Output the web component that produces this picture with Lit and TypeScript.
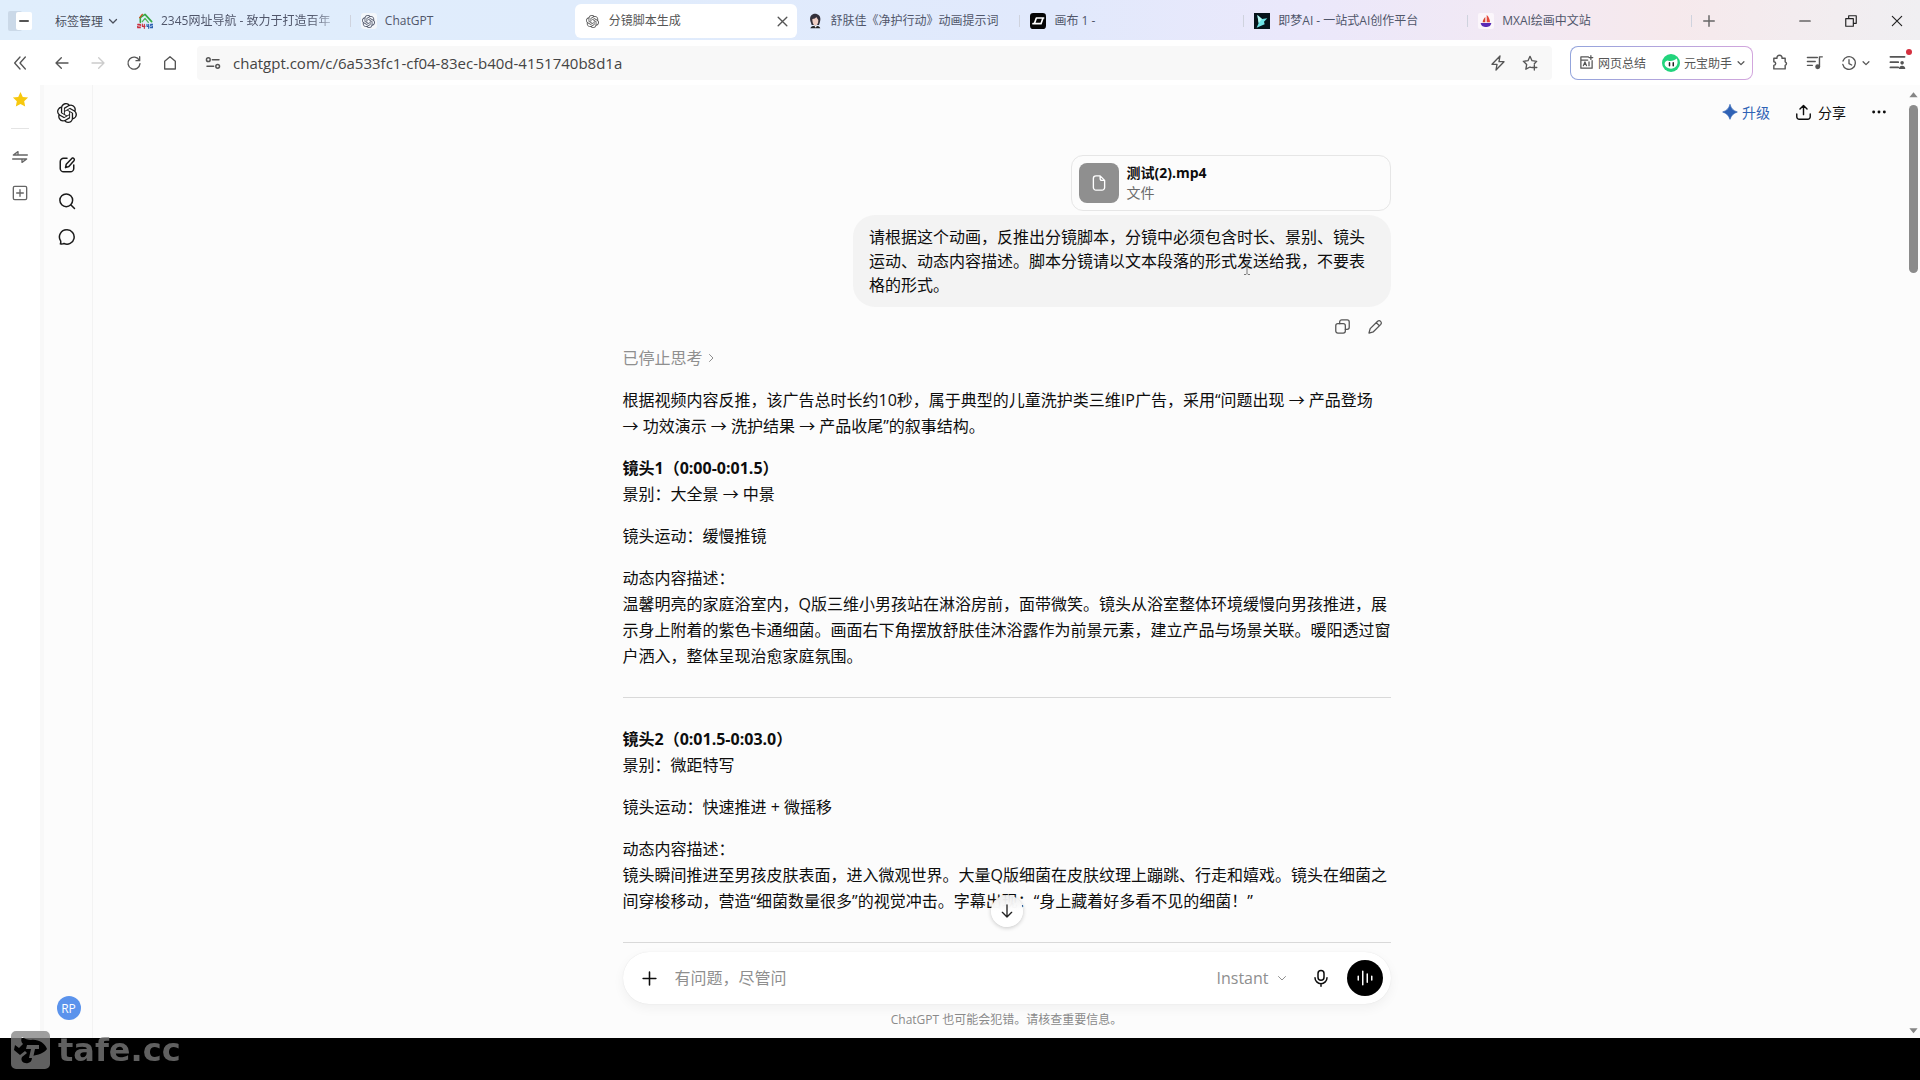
import { LitElement, html, svg, css, nothing } from "lit";
import type { SVGTemplateResult } from "lit";
import { customElement } from "lit/decorators.js";
import { classMap } from "lit/directives/class-map.js";

const knot = svg`<path fill="currentColor" stroke="none" d="M22.2819 9.8211a5.9847 5.9847 0 0 0-.5157-4.9108 6.0462 6.0462 0 0 0-6.5098-2.9A6.0651 6.0651 0 0 0 4.9807 4.1818a5.9847 5.9847 0 0 0-3.9977 2.9 6.0462 6.0462 0 0 0 .7427 7.0966 5.98 5.98 0 0 0 .511 4.9107 6.051 6.051 0 0 0 6.5146 2.9001A5.9847 5.9847 0 0 0 13.2599 24a6.0557 6.0557 0 0 0 5.7718-4.2058 5.9894 5.9894 0 0 0 3.9977-2.9001 6.0557 6.0557 0 0 0-.7475-7.0729zm-9.022 12.6081a4.4755 4.4755 0 0 1-2.8764-1.0408l.1419-.0804 4.7783-2.7582a.7948.7948 0 0 0 .3927-.6813v-6.7369l2.02 1.1686a.071.071 0 0 1 .038.052v5.5826a4.504 4.504 0 0 1-4.4945 4.4944zm-9.6607-4.1254a4.4708 4.4708 0 0 1-.5346-3.0137l.142.0852 4.783 2.7582a.7712.7712 0 0 0 .7806 0l5.8428-3.3685v2.3324a.0804.0804 0 0 1-.0332.0615L9.74 19.9502a4.4992 4.4992 0 0 1-6.1408-1.6464zM2.3408 7.8956a4.485 4.485 0 0 1 2.3655-1.9728V11.6a.7664.7664 0 0 0 .3879.6765l5.8144 3.3543-2.0201 1.1685a.0757.0757 0 0 1-.071 0l-4.8303-2.7865A4.504 4.504 0 0 1 2.3408 7.872zm16.5963 3.8558L13.1038 8.364 15.1192 7.2a.0757.0757 0 0 1 .071 0l4.8303 2.7913a4.4944 4.4944 0 0 1-.6765 8.1042v-5.6772a.79.79 0 0 0-.407-.667zm2.0107-3.0231l-.142-.0852-4.7735-2.7818a.7759.7759 0 0 0-.7854 0L9.409 9.2297V6.8974a.0662.0662 0 0 1 .0284-.0615l4.8303-2.7866a4.4992 4.4992 0 0 1 6.6802 4.66zM8.3065 12.863l-2.02-1.1638a.0804.0804 0 0 1-.038-.0567V6.0742a4.4992 4.4992 0 0 1 7.3757-3.4537l-.142.0805L8.704 5.459a.7948.7948 0 0 0-.3927.6813zm1.0976-2.3654l2.602-1.4998 2.6069 1.4998v2.9994l-2.5974 1.4997-2.6067-1.4997Z"/>`;

const icons: Record<string, SVGTemplateResult> = {
  knot,
  panel: svg`<rect x="0" y="2" width="14" height="20" rx="2" fill="#cbd9e8" stroke="none"/><rect x="8" y="3" width="16" height="18" rx="2" fill="#fff" stroke="none"/><path d="M12 12h8" stroke="#555" stroke-width="2"/>`,
  chevron: svg`<path d="M5 9l7 7 7-7"/>`,
  chevronRight: svg`<path d="M9 5l7 7-7 7"/>`,
  close: svg`<path d="M4 4l16 16M20 4L4 20"/>`,
  plus: svg`<path d="M12 3v18M3 12h18"/>`,
  minus: svg`<path d="M3 12h18"/>`,
  restore: svg`<path d="M3 8h13v13H3zM8 8V3h13v13h-5"/>`,
  collapse: svg`<path d="M12 3l-8 9 8 9M20 3l-8 9 8 9"/>`,
  back: svg`<path d="M21 12H3M11 4l-8 8 8 8"/>`,
  forward: svg`<path d="M3 12h18M13 4l8 8-8 8"/>`,
  reload: svg`<path d="M20 8a9 9 0 1 0 1 5M20.500 2.500V8.500H15"/>`,
  home: svg`<path d="M4 9.500L12 2.500l8 7V21H4z"/>`,
  site: svg`<circle cx="5" cy="7" r="2.800"/><path d="M11 7h10M3 17h10"/><circle cx="19" cy="17" r="2.800"/>`,
  bolt: svg`<path d="M15 1.500L3 14h7.500L9 22.500 21 10h-7.500z"/>`,
  starPlus: svg`<path d="M13 18.500l-1-.5-6.200 3.300 1.200-7L2 9.500l7-1 3-6.500 3 6.500 7 1-3.500 3.500M18.500 15v7.500M14.700 18.700h7.500"/>`,
  aiBox: svg`<path d="M15 3H3v18h18V9M3 8h11M7 17l2.500-6 2.500 6M8 15h3M16 11v6M19 1v6M16 4h6"/>`,
  bao: svg`<circle cx="12" cy="12" r="12" fill="#22d47c" stroke="none"/><path d="M3.500 13c0-2 1.500-4 4-4.500 4 1.500 9 .5 12-2.500 1.300 2 1.500 4.500 1 7-.8 4-4.300 6.500-8.500 6.500S3.500 17 3.500 13z" fill="#fff" stroke="none"/><path d="M10 11.500v4M15 11.500v4" stroke="#222" stroke-width="2"/>`,
  puzzle: svg`<path d="M4 6h4.500c-1-5.500 8-5.500 7 0H20v5c2.500 1 2.500 4 0 5v5H4v-5c3.500-.5 3.500-4.500 0-5z"/>`,
  playlist: svg`<path d="M2 5h14M2 10.500h11M2 16h7M19 18V4h4"/><circle cx="16.500" cy="18" r="2.500" fill="currentColor"/>`,
  history: svg`<path d="M3 9a9.500 9.500 0 1 1-.3 5M12 7v6l4 2"/>`,
  menuUser: svg`<path d="M2 4h20M2 11.500h11M2 19h11"/><circle cx="18.500" cy="12.500" r="2.500" fill="currentColor" stroke="none"/><path d="M14 21c0-6 9-6 9 0z" fill="currentColor" stroke="none"/>`,
  starFill: svg`<path d="M12 1.500l3.200 6.900 7.500.9-5.500 5.200 1.400 7.500L12 18.300 5.400 22l1.400-7.500L1.300 9.300l7.500-.9z" fill="#f7c80e" stroke="none"/>`,
  swap: svg`<path d="M23 9H2L9 4v5M1 15h21l-7 5v-5"/>`,
  plusBox: svg`<rect x="2" y="2" width="20" height="20" rx="2"/><path d="M12 7v10M7 12h10"/>`,
  compose: svg`<path d="M12 3H7.500A4.500 4.500 0 0 0 3 7.500v9A4.500 4.500 0 0 0 7.500 21h9a4.500 4.500 0 0 0 4.500-4.500V12M19 2.700a2.200 2.200 0 0 1 2.500 3.200L14.500 14l-4.500 1.500L11 11z"/>`,
  search: svg`<circle cx="11" cy="11" r="8.500"/><path d="M17.300 17.300L22 22"/>`,
  bubble: svg`<path d="M12 2.500a9.500 9.500 0 1 1-4 18.100c-1.500.9-3.500 1-4.800.6.500-1.200.7-2.500.3-4A9.500 9.500 0 0 1 12 2.500z"/>`,
  sparkle: svg`<path d="M12 1c2 6 5 9 11 11-6 2-9 5-11 11-2-6-5-9-11-11 6-2 9-5 11-11z" fill="currentColor"/>`,
  share: svg`<path d="M12 15V2.500M7 7l5-5 5 5M2.500 14v4a3.500 3.500 0 0 0 3.500 3.500h12a3.500 3.500 0 0 0 3.500-3.500v-4"/>`,
  dots: svg`<g fill="currentColor" stroke="none"><circle cx="4" cy="12" r="2.200"/><circle cx="12" cy="12" r="2.200"/><circle cx="20" cy="12" r="2.200"/></g>`,
  file: svg`<path d="M13.500 2.500H8A3.500 3.500 0 0 0 4.500 6v12A3.500 3.500 0 0 0 8 21.500h8a3.500 3.500 0 0 0 3.500-3.500V8.500zM13.500 2.500V6A2.500 2.500 0 0 0 16 8.500h3.500"/>`,
  copy: svg`<rect x="2.500" y="8" width="13.500" height="13.500" rx="3"/><path d="M8 8V5.500a3 3 0 0 1 3-3h7.500a3 3 0 0 1 3 3V13a3 3 0 0 1-3 3H16"/>`,
  pencil: svg`<path d="M15 4.500a3.200 3.200 0 0 1 4.500 4.500L9 19.500 2.800 21.200 4.500 15zM13 6.500l4.500 4.500"/>`,
  down: svg`<path d="M12 3v18M5 14l7 7 7-7"/>`,
  mic: svg`<rect x="8" y="2" width="8" height="13" rx="4"/><path d="M4 11.500a8 8 0 0 0 16 0M12 19.500V23"/>`,
  voice: svg`<path d="M3 9.500v5M9 3v18M15 6.500v11M21 9.500v5"/>`,
  triUp: svg`<path d="M1 19L12 6l11 13z" fill="currentColor" stroke="none"/>`,
  triDown: svg`<path d="M1 6l11 13L23 6z" fill="currentColor" stroke="none"/>`,
  houseColors: svg`<path d="M5 14V7l7-5 10 11" stroke="#35a843" stroke-width="2.500"/><path d="M4 7l4-5" stroke="#c8501e" stroke-width="2"/><path d="M8 13l4-5 5 6" stroke="#54b95d" stroke-width="2"/><path d="M1 17h4v2.500H1V22h4M8 16.500V20h4M11 17v6" stroke="#c92f3d" stroke-width="1.700"/><path d="M15 17v3h3M17.500 17v6M23.500 17h-3v2.500h3V22h-3.500" stroke="#2b5faf" stroke-width="1.700"/>`,
  portrait: svg`<path d="M5 12C3 4 8 1 12 1s10 3 7.500 12L18 18H7z" fill="#33303a" stroke="none"/><path d="M8 9c3 0 5-1 6-3 1 2 2.500 3 3 5 0 5-2 8-4.500 8S8 15 8 9z" fill="#f0cfc4" stroke="none"/><path d="M5 23c1-5 14-5 15 0z" fill="#222" stroke="none"/><path d="M11 19h4l-2 3z" fill="#fff" stroke="none"/>`,
  canvas: svg`<rect width="24" height="24" rx="5" fill="#050505" stroke="none"/><path d="M9.500 7.500h10l-3 8.500h-10zM4.500 16h4M16.500 7.500h4" stroke="#fff" stroke-width="2.500"/>`,
  dream: svg`<rect width="24" height="24" fill="#06131a" stroke="none"/><path d="M5 3l7 6 8-1-5 5 1 4-7 3-5 2 3-7z" fill="#6fe3e6" stroke="none"/><path d="M5 3l7 6-5 6z" fill="#b8f6ef" stroke="none"/>`,
  boat: svg`<rect width="24" height="24" rx="3" fill="#fbf6fb" stroke="none"/><path d="M13 3v11h5c0-4-2-9-5-11z" fill="#e6493c" stroke="none"/><path d="M11 6v8H7c0-3 2-6 4-8z" fill="#d6452f" stroke="none"/><path d="M4 15h16c-1 5-4 6-8 6s-7-1-8-6z" fill="#5a2bb5" stroke="none"/>`,
};

const icon = (name: string, size = 20, stroke = 2, cls = "") => html`<svg
  class="icon ${cls}" width=${size} height=${size} viewBox="0 0 24 24" fill="none"
  stroke="currentColor" stroke-width=${stroke} stroke-linecap="round" stroke-linejoin="round"
  aria-hidden="true">${icons[name]}</svg>`;

const iconButton = (name: string, label: string, size = 20, stroke = 2, cls = "") => html`<button
  class="icon-button ${cls}" aria-label=${label}>${icon(name, size, stroke)}</button>`;

interface Tab { icon: string; title: string; active?: boolean; faded?: boolean; rule?: boolean }

const tabs: Tab[] = [
  { icon: "houseColors", title: "2345网址导航 - 致力于打造百年", faded: true, rule: true },
  { icon: "knot", title: "ChatGPT" },
  { icon: "knot", title: "分镜脚本生成", active: true },
  { icon: "portrait", title: "舒肤佳《净护行动》动画提示词", rule: true },
  { icon: "canvas", title: "画布 1 -", rule: true },
  { icon: "dream", title: "即梦AI - 一站式AI创作平台", rule: true },
  { icon: "boat", title: "MXAI绘画中文站", rule: true },
];

interface Shot { title: string; size: string; move: string; text: string }

const shots: Shot[] = [
  {
    title: "镜头1（0:00-0:01.5）",
    size: "大全景 → 中景",
    move: "缓慢推镜",
    text: "温馨明亮的家庭浴室内，Q版三维小男孩站在淋浴房前，面带微笑。镜头从浴室整体环境缓慢向男孩推进，展示身上附着的紫色卡通细菌。画面右下角摆放舒肤佳沐浴露作为前景元素，建立产品与场景关联。暖阳透过窗户洒入，整体呈现治愈家庭氛围。",
  },
  {
    title: "镜头2（0:01.5-0:03.0）",
    size: "微距特写",
    move: "快速推进 + 微摇移",
    text: "镜头瞬间推进至男孩皮肤表面，进入微观世界。大量Q版细菌在皮肤纹理上蹦跳、行走和嬉戏。镜头在细菌之间穿梭移动，营造“细菌数量很多”的视觉冲击。字幕出现：“身上藏着好多看不见的细菌！”",
  },
];

const shared = css`
  * { box-sizing: border-box; }
  button, input, select {
    font: inherit;
    color: inherit;
    background: none;
    border: 0;
    padding: 0;
    margin: 0;
    outline: none;
  }
  button { display: inline-flex; align-items: center; justify-content: center; white-space: nowrap; }
  p, h2 { margin: 0; }
  .icon { display: block; flex: none; }
`;

@customElement("browser-chrome")
export class BrowserChrome extends LitElement {
  static styles = [shared, css`
    :host { display: block; font-size: 12px; color: #4a4f5c; }
    .strip {
      display: flex;
      align-items: center;
      height: 40px;
      padding-top: 2px;
      background: linear-gradient(90deg, #e0eefc 0%, #e0ecfc 30%, #e1e9fc 55%, #ebe8fb 68%, #f3e9f3 80%, #f6e9ec 87%, #f0eff2 100%);
    }
    .manage { display: flex; width: 127px; flex: none; align-items: center; padding-left: 8px; gap: 23px; }
    .manage-button { gap: 4px; }
    .tabs { display: flex; flex: 1; min-width: 0; height: 100%; align-items: center; }
    .tab {
      display: flex;
      flex: 1 1 0;
      min-width: 0;
      height: 32px;
      align-items: center;
      gap: 8px;
      padding: 0 10px;
      color: #50566a;
      position: relative;
    }
    .tab.active { height: 34px; background: #fff; border-radius: 6px; color: #555; padding-right: 8px; }
    .tab.rule::after { content: ""; position: absolute; right: 0; top: 10px; height: 12px; width: 1px; background: #cfd3de; }
    .tab-title { white-space: nowrap; line-height: 18px; text-align: left; }
    .tab-title.faded { mask-image: linear-gradient(90deg, #000 88%, rgba(0, 0, 0, 0.4)); }
    .tab-link { display: flex; flex: 1; min-width: 0; align-items: center; gap: 8px; color: inherit; text-decoration: none; }
    .tile { display: flex; flex: none; width: 16px; height: 16px; align-items: center; justify-content: center; }
    .tile.white { background: #f4f7fb; border-radius: 3px; }
    .window { display: flex; width: 228px; flex: none; align-items: center; justify-content: space-between; padding: 0 16px 0 10px; color: #666; }
    .window-controls { display: flex; gap: 32px; color: #222; }
    .bar { display: flex; align-items: center; height: 45px; background: #fff; color: #555; }
    .nav { display: flex; width: 197px; flex: none; align-items: center; padding-left: 12px; gap: 20px; }
    .nav .first { margin-right: 6px; }
    .disabled { color: #ccc; }
    .address {
      display: flex;
      flex: 1;
      min-width: 0;
      height: 34px;
      align-items: center;
      gap: 12px;
      padding: 0 14px 0 8px;
      background: #f8f8f8;
      border-radius: 4px;
    }
    .url { flex: 1; min-width: 0; font-size: 15px; line-height: 20px; color: #444; }
    .quick { display: flex; gap: 16px; }
    .assist {
      display: flex;
      height: 34px;
      align-items: center;
      gap: 16px;
      margin-left: 18px;
      padding: 0 6px 0 8px;
      border: 1px solid transparent;
      border-radius: 8px;
      background: linear-gradient(#fff, #fff) padding-box, linear-gradient(90deg, #93a4dc, #d2a6dd) border-box;
    }
    .assist-button { gap: 4px; }
    .extras { display: flex; align-items: center; gap: 18px; padding: 0 14px 0 18px; }
    .history { gap: 4px; }
    .badge-holder { position: relative; display: inline-flex; }
    .badge { position: absolute; right: -6px; top: -5px; width: 6px; height: 6px; border-radius: 50%; background: #d5303f; }
  `];

  private renderTab(tab: Tab) {
    const knotTab = tab.icon === "knot";
    return html`<div class=${classMap({ tab: true, active: !!tab.active, rule: !!tab.rule })}>
      <a class="tab-link" href="#">
        <span class=${classMap({ tile: true, white: knotTab && !tab.active })}>${icon(tab.icon, knotTab ? 13 : 16, 2)}</span>
        <span class=${classMap({ "tab-title": true, faded: !!tab.faded })}>${tab.title}</span>
      </a>
      ${tab.active ? iconButton("close", "关闭标签页", 13, 2.5) : nothing}
    </div>`;
  }

  render() {
    return html`
      <header class="strip">
        <div class="manage">
          ${iconButton("panel", "侧边栏", 24, 2)}
          <button class="manage-button">标签管理 ${icon("chevron", 12, 2.5)}</button>
        </div>
        <nav class="tabs">${tabs.map((t) => this.renderTab(t))}</nav>
        <div class="window">
          ${iconButton("plus", "新建标签页", 14, 2.5)}
          <div class="window-controls">
            ${iconButton("minus", "最小化", 14, 2)}${iconButton("restore", "还原", 14, 2)}${iconButton("close", "关闭", 14, 2)}
          </div>
        </div>
      </header>
      <div class="bar">
        <div class="nav">
          ${iconButton("collapse", "收起", 16, 2, "first")}
          ${iconButton("back", "后退", 16, 2)}
          ${iconButton("forward", "前进", 16, 2, "disabled")}
          ${iconButton("reload", "刷新", 16, 2)}
          ${iconButton("home", "主页", 16, 2)}
        </div>
        <div class="address">
          ${icon("site", 16, 2.2)}
          <input class="url" aria-label="地址栏" value="chatgpt.com/c/6a533fc1-cf04-83ec-b40d-4151740b8d1a" />
          <div class="quick">${iconButton("bolt", "加速", 16, 2)}${iconButton("starPlus", "收藏", 16, 2)}</div>
        </div>
        <div class="assist">
          <button class="assist-button">${icon("aiBox", 15, 2)}网页总结</button>
          <button class="assist-button">${icon("bao", 18, 2)}<span>元宝助手</span>${icon("chevron", 10, 3)}</button>
        </div>
        <div class="extras">
          ${iconButton("puzzle", "扩展", 17, 2)}
          ${iconButton("playlist", "媒体", 17, 2)}
          <button class="history" aria-label="历史">${icon("history", 16, 2)}${icon("chevron", 10, 3)}</button>
          <span class="badge-holder">${iconButton("menuUser", "菜单", 17, 2.5)}<span class="badge"></span></span>
        </div>
      </div>`;
  }
}

@customElement("chat-message-list")
export class ChatMessageList extends LitElement {
  static styles = [shared, css`
    :host { display: flex; flex-direction: column; font-size: 16px; line-height: 26px; color: #0d0d0d; }
    .user { display: flex; flex-direction: column; align-items: flex-end; gap: 4px; }
    .attachment {
      display: flex;
      width: 320px;
      max-width: 100%;
      height: 56px;
      align-items: center;
      gap: 8px;
      padding: 0 7px;
      border: 1px solid #e6e6e6;
      border-radius: 12px;
      font-size: 14px;
      line-height: 20px;
    }
    .file { display: flex; width: 40px; height: 40px; align-items: center; justify-content: center; border-radius: 8px; background: #8f8f8f; color: #fff; }
    .name { font-weight: 700; }
    .kind { color: #6b6b6b; }
    .bubble {
      position: relative;
      max-width: 70%;
      padding: 10px 16px;
      border-radius: 22px;
      background: #f3f3f3;
      line-height: 24px;
    }
    .caret { position: absolute; left: 390px; top: 46px; color: #777; }
    .actions { display: flex; gap: 16px; padding: 7px 7px 0 0; color: #555; }
    .thinking { align-self: flex-start; gap: 2px; margin: 10px 0 16px; color: #8f8f8f; }
    .block { margin-bottom: 16px; }
    .heading { font-size: 16px; line-height: 26px; font-weight: 700; }
    .last { margin-bottom: 0; }
    .divider { width: 100%; height: 1px; margin: 28px 0; border: 0; background: #d9d9d9; }
  `];

  render() {
    return html`
      <section class="user">
        <div class="attachment">
          <span class="file">${icon("file", 18, 1.8)}</span>
          <div><p class="name">测试(2).mp4</p><p class="kind">文件</p></div>
        </div>
        <p class="bubble">请根据这个动画，反推出分镜脚本，分镜中必须包含时长、景别、镜头运动、动态内容描述。脚本分镜请以文本段落的形式发送给我，不要表格的形式。
          <svg class="caret" width="8" height="14" viewBox="0 0 8 14" fill="none" stroke="currentColor" aria-hidden="true"><path d="M1 .5h2l1 1 1-1h2M4 1.500v11M1 13.500h2l1-1 1 1h2"/></svg></p>
        <div class="actions">${iconButton("copy", "复制", 17, 1.8)}${iconButton("pencil", "编辑", 17, 1.8)}</div>
      </section>
      <button class="thinking">已停止思考 ${icon("chevronRight", 12, 2)}</button>
      <p class="block">根据视频内容反推，该广告总时长约10秒，属于典型的儿童洗护类三维IP广告，采用“问题出现 → 产品登场 → 功效演示 → 洗护结果 → 产品收尾”的叙事结构。</p>
      ${shots.map((s) => html`
        <h2 class="heading">${s.title}</h2>
        <p class="block">景别：${s.size}</p>
        <p class="block">镜头运动：${s.move}</p>
        <p class="block last">动态内容描述：<br />${s.text}</p>
        <hr class="divider" />`)}`;
  }
}

@customElement("chat-composer")
export class ChatComposer extends LitElement {
  static styles = [shared, css`
    :host { display: block; position: relative; }
    .box {
      display: flex;
      height: 52px;
      align-items: center;
      padding: 0 8px 0 18px;
      border-radius: 26px;
      background: #fff;
      box-shadow: 0 0 1px rgba(0, 0, 0, 0.12), 0 4px 12px rgba(0, 0, 0, 0.05);
      font-size: 16px;
      color: #0d0d0d;
    }
    .prompt { flex: 1; min-width: 0; height: 26px; margin-left: 17px; }
    .prompt::placeholder { color: #8f8f8f; opacity: 1; }
    .model { display: flex; align-items: center; gap: 6px; color: #8f8f8f; }
    .select { appearance: none; }
    .mic { margin: 0 17px 0 24px; }
    .voice { width: 36px; height: 36px; border-radius: 50%; background: #000; color: #fff; }
    .note { padding-bottom: 2px; font-size: 12px; line-height: 32px; text-align: center; color: #8a8a8a; }
    .jump {
      position: absolute;
      left: calc(50% - 16px);
      top: -57px;
      width: 32px;
      height: 32px;
      border-radius: 50%;
      background: linear-gradient(rgba(236, 236, 236, 0.93), #fff 50%);
      box-shadow: 0 1px 4px rgba(0, 0, 0, 0.22);
      color: #222;
    }
  `];

  render() {
    return html`
      ${iconButton("down", "滚动到底部", 16, 2, "jump")}
      <form class="box">
        ${iconButton("plus", "添加", 17, 2.2)}
        <input class="prompt" type="text" aria-label="消息" placeholder="有问题，尽管问" />
        <label class="model"><select class="select" aria-label="模型"><option>Instant</option></select>${icon("chevron", 12, 2)}</label>
        ${iconButton("mic", "听写", 18, 2, "mic")}
        ${iconButton("voice", "语音", 18, 2, "voice")}
      </form>
      <p class="note">ChatGPT 也可能会犯错。请核查重要信息。</p>`;
  }
}

@customElement("app-root")
export class AppRoot extends LitElement {
  static styles = [shared, css`
    :host {
      display: flex;
      flex-direction: column;
      height: 100vh;
      overflow: hidden;
      position: relative;
      background: #000;
      font-family: "Open Sans", "Noto Sans CJK SC", sans-serif;
    }
    .body { display: flex; flex: 1; min-height: 0; background: #fcfcfc; }
    .dock { display: flex; flex-direction: column; width: 44px; flex: none; align-items: center; padding: 6px 0 0; background: #fff; color: #666; border-right: 4px solid #f8f8f8; }
    .dock-rule { width: 18px; height: 1px; margin: 20px 0; background: #e4e4e4; }
    .dock-list { display: flex; flex-direction: column; gap: 20px; }
    .rail { display: flex; flex-direction: column; width: 49px; flex: none; align-items: center; justify-content: space-between; padding: 18px 2px 18px 0; border-right: 1px solid #f3f3f3; color: #1a1a1a; }
    .rail-list { display: flex; flex-direction: column; align-items: center; gap: 18px; }
    .brand { margin-bottom: 15px; }
    .avatar { width: 24px; height: 24px; margin-left: 3px; border-radius: 50%; background: #5b93ec; color: #fff; font-size: 12px; }
    .main { display: flex; flex: 1; min-width: 0; flex-direction: column; padding-left: 14px; }
    .top { display: flex; height: 54px; flex: none; align-items: center; justify-content: flex-end; gap: 25px; padding-right: 19px; font-size: 14px; color: #0d0d0d; }
    .top-button { gap: 6px; }
    .upgrade { color: #2f62b5; gap: 4px; }
    .column { width: 100%; max-width: 768px; margin: 0 auto; }
    .scroll { flex: 1; min-height: 0; overflow: hidden; padding-top: 16px; }
    .track { display: flex; flex-direction: column; width: 14px; flex: none; align-items: center; justify-content: space-between; padding: 5px 0 3px; color: #858585; }
    .track-start { display: flex; flex-direction: column; align-items: center; gap: 6px; }
    .thumb { width: 9px; height: 168px; border-radius: 5px; background: #8b8b8b; }
    .letterbox { height: 42px; flex: none; }
    .watermark { position: absolute; left: 11px; bottom: 11px; display: flex; align-items: center; gap: 8px; color: #808080; opacity: 0.75; }
    .watermark-text { font-family: "DejaVu Sans", sans-serif; font-size: 32px; line-height: 38px; font-weight: 700; }
  `];

  render() {
    return html`
      <browser-chrome></browser-chrome>
      <div class="body">
        <aside class="dock">
          ${iconButton("starFill", "收藏夹", 17)}
          <span class="dock-rule"></span>
          <div class="dock-list">
            ${iconButton("swap", "切换", 16, 2)}
            ${iconButton("plusBox", "添加", 16, 2)}
          </div>
        </aside>
        <nav class="rail">
          <div class="rail-list">
            ${iconButton("knot", "ChatGPT", 20, 2, "brand")}
            ${iconButton("compose", "新聊天", 18, 2)}
            ${iconButton("search", "搜索", 18, 2)}
            ${iconButton("bubble", "聊天", 18, 2)}
          </div>
          <button class="avatar">RP</button>
        </nav>
        <main class="main">
          <div class="top">
            <button class="top-button upgrade">${icon("sparkle", 16, 1)}升级</button>
            <button class="top-button">${icon("share", 17, 2)}分享</button>
            ${iconButton("dots", "更多", 16)}
          </div>
          <div class="scroll"><chat-message-list class="column"></chat-message-list></div>
          <chat-composer class="column"></chat-composer>
        </main>
        <div class="track">
          <div class="track-start">${icon("triUp", 9)}<span class="thumb"></span></div>
          ${icon("triDown", 9)}
        </div>
      </div>
      <div class="letterbox"></div>
      <div class="watermark">
        <svg class="icon" width="39" height="38" viewBox="0 0 39 38" fill="currentColor" aria-hidden="true">
          <path fill-rule="evenodd" d="M5 0h29a5 5 0 0 1 5 5v28a5 5 0 0 1-5 5H5a5 5 0 0 1-5-5V5a5 5 0 0 1 5-5zM11 6Q9 10 12 13L8 17l-4-3-1 5 6 5 5-4 2 2-5 4c-2 4 2 7 6 6 4-1 4-4 4-7 6-1 12-3 15-7-2-6-9-10-16-9-3 0-6-1-9-3z"/>
          <path d="M16 14h12v4h-4l-2 9h-4l2-9h-5z"/>
        </svg>
        <span class="watermark-text">tafe.cc</span>
      </div>`;
  }
}
